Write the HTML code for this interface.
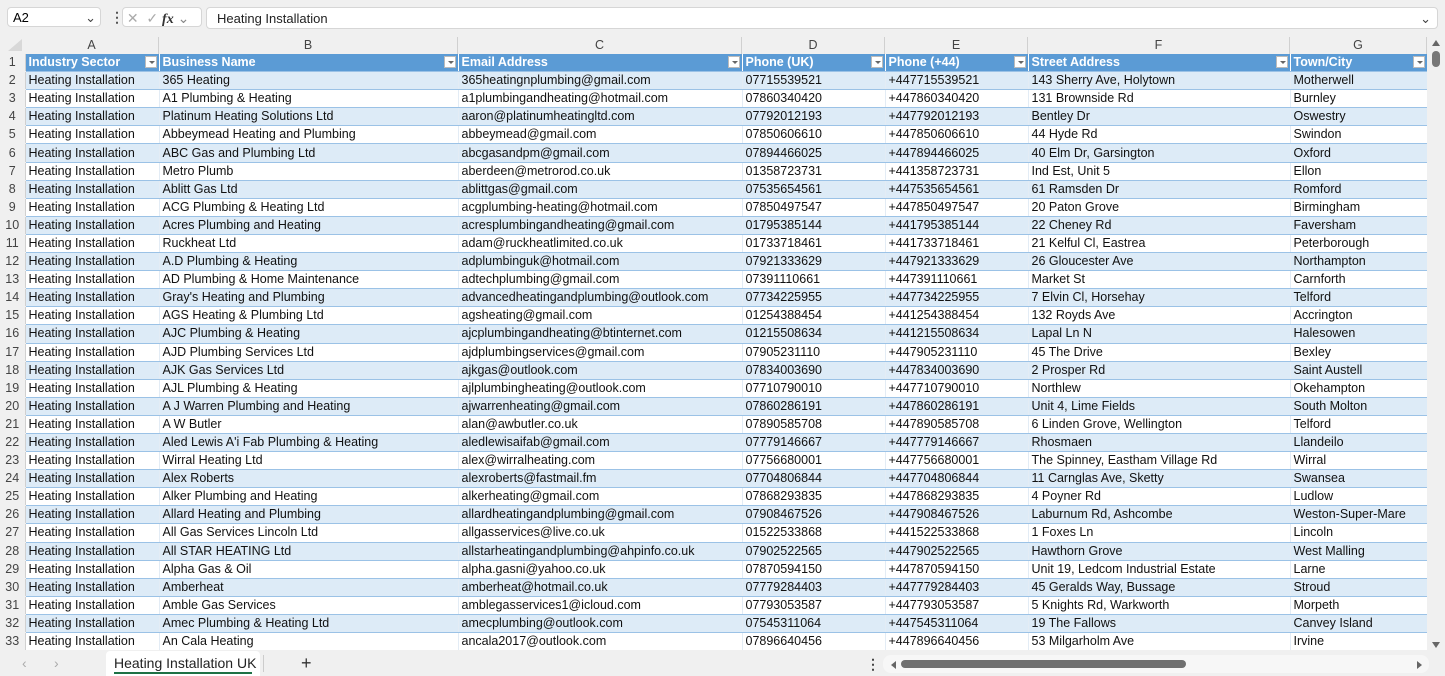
<!DOCTYPE html>
<html><head><meta charset="utf-8"><style>
body{margin:0;width:1445px;height:676px;overflow:hidden;background:#f0f0f0;font-family:"Liberation Sans",sans-serif;position:relative}
.abs{position:absolute}
.box{background:#fff;border:1px solid #d6d6d6;border-radius:4px}
table{border-collapse:collapse;table-layout:fixed;position:absolute;left:0;top:54px;font-size:12.5px;color:#111}
td{height:17.1px;padding:0 3px;white-space:nowrap;overflow:hidden;border-bottom:1px solid #9bc2e6;border-right:1px solid #e3ecf5;line-height:17px}
td.n{background:#f0f0f0;color:#444;text-align:center;border-right:1px solid #d0d0d0;border-bottom:1px solid #f0f0f0;padding:0;font-size:12.5px}
tr:nth-child(even) td:not(.n){background:#ddebf7}
tr:nth-child(odd) td:not(.n){background:#fff}
tr.h td:not(.n){background:#5b9bd5;color:#fff;font-weight:bold;position:relative;border-right:1px solid #fff}
.dd{position:absolute;right:2px;top:2px;width:12px;height:12px;background:#fff;border:1px solid #bbb;box-sizing:border-box}
.dd:after{content:"";position:absolute;left:3px;top:4px;border:3px solid transparent;border-top:3px solid #666}
.ch{position:absolute;top:37px;height:17px;font-size:12.5px;color:#444;text-align:center;line-height:17px;border-right:1px solid #d0d0d0;box-sizing:border-box}
</style></head><body>
<div class="abs" style="left:0;top:0;width:1445px;height:36px;background:#f0f0f0"></div>
<div class="abs box" style="left:7px;top:7px;width:94px;height:20px;font-size:13px;line-height:20px;padding-left:5px;box-sizing:border-box">A2<span style="position:absolute;right:4px;top:0;color:#444">&#8964;</span></div>
<div class="abs" style="left:110px;top:9px;font-size:14px;color:#555;font-weight:bold">&#8942;</div>
<div class="abs box" style="left:122px;top:7px;width:80px;height:20px;font-size:14px;line-height:20px;color:#aaa;box-sizing:border-box">&nbsp;✕ &nbsp;✓ <i style="color:#333;font-family:'Liberation Serif',serif;font-weight:bold">fx</i> <span style="color:#888">&#8964;</span></div>
<div class="abs box" style="left:206px;top:7px;width:1232px;height:22px;font-size:13px;line-height:22px;padding-left:10px;box-sizing:border-box;color:#222">Heating Installation<span style="position:absolute;right:6px;top:0;color:#444">&#8964;</span></div>
<div class="abs" style="left:0;top:36px;width:1430px;height:18px;background:#f0f0f0"></div>
<div class="abs" style="left:8px;top:39px;width:0;height:0;border-left:14px solid transparent;border-bottom:12px solid #d8d8d8"></div>
<div class="ch" style="left:25px;width:134px">A</div>
<div class="ch" style="left:159px;width:299px">B</div>
<div class="ch" style="left:458px;width:284px">C</div>
<div class="ch" style="left:742px;width:143px">D</div>
<div class="ch" style="left:885px;width:143px">E</div>
<div class="ch" style="left:1028px;width:262px">F</div>
<div class="ch" style="left:1290px;width:137px">G</div>
<table>
<colgroup><col style="width:25px"><col style="width:134px"><col style="width:299px"><col style="width:284px"><col style="width:143px"><col style="width:143px"><col style="width:262px"><col style="width:137px"></colgroup>
<tr class="h"><td class="n">1</td><td>Industry Sector<span class="dd"></span></td><td>Business Name<span class="dd"></span></td><td>Email Address<span class="dd"></span></td><td>Phone (UK)<span class="dd"></span></td><td>Phone (+44)<span class="dd"></span></td><td>Street Address<span class="dd"></span></td><td>Town/City<span class="dd"></span></td></tr>
<tr><td class="n">2</td><td>Heating Installation</td><td>365 Heating</td><td>365heatingnplumbing@gmail.com</td><td>07715539521</td><td>+447715539521</td><td>143 Sherry Ave, Holytown</td><td>Motherwell</td></tr>
<tr><td class="n">3</td><td>Heating Installation</td><td>A1 Plumbing &amp; Heating</td><td>a1plumbingandheating@hotmail.com</td><td>07860340420</td><td>+447860340420</td><td>131 Brownside Rd</td><td>Burnley</td></tr>
<tr><td class="n">4</td><td>Heating Installation</td><td>Platinum Heating Solutions Ltd</td><td>aaron@platinumheatingltd.com</td><td>07792012193</td><td>+447792012193</td><td>Bentley Dr</td><td>Oswestry</td></tr>
<tr><td class="n">5</td><td>Heating Installation</td><td>Abbeymead Heating and Plumbing</td><td>abbeymead@gmail.com</td><td>07850606610</td><td>+447850606610</td><td>44 Hyde Rd</td><td>Swindon</td></tr>
<tr><td class="n">6</td><td>Heating Installation</td><td>ABC Gas and Plumbing Ltd</td><td>abcgasandpm@gmail.com</td><td>07894466025</td><td>+447894466025</td><td>40 Elm Dr, Garsington</td><td>Oxford</td></tr>
<tr><td class="n">7</td><td>Heating Installation</td><td>Metro Plumb</td><td>aberdeen@metrorod.co.uk</td><td>01358723731</td><td>+441358723731</td><td>Ind Est, Unit 5</td><td>Ellon</td></tr>
<tr><td class="n">8</td><td>Heating Installation</td><td>Ablitt Gas Ltd</td><td>ablittgas@gmail.com</td><td>07535654561</td><td>+447535654561</td><td>61 Ramsden Dr</td><td>Romford</td></tr>
<tr><td class="n">9</td><td>Heating Installation</td><td>ACG Plumbing &amp; Heating Ltd</td><td>acgplumbing-heating@hotmail.com</td><td>07850497547</td><td>+447850497547</td><td>20 Paton Grove</td><td>Birmingham</td></tr>
<tr><td class="n">10</td><td>Heating Installation</td><td>Acres Plumbing and Heating</td><td>acresplumbingandheating@gmail.com</td><td>01795385144</td><td>+441795385144</td><td>22 Cheney Rd</td><td>Faversham</td></tr>
<tr><td class="n">11</td><td>Heating Installation</td><td>Ruckheat Ltd</td><td>adam@ruckheatlimited.co.uk</td><td>01733718461</td><td>+441733718461</td><td>21 Kelful Cl, Eastrea</td><td>Peterborough</td></tr>
<tr><td class="n">12</td><td>Heating Installation</td><td>A.D Plumbing &amp; Heating</td><td>adplumbinguk@hotmail.com</td><td>07921333629</td><td>+447921333629</td><td>26 Gloucester Ave</td><td>Northampton</td></tr>
<tr><td class="n">13</td><td>Heating Installation</td><td>AD Plumbing &amp; Home Maintenance</td><td>adtechplumbing@gmail.com</td><td>07391110661</td><td>+447391110661</td><td>Market St</td><td>Carnforth</td></tr>
<tr><td class="n">14</td><td>Heating Installation</td><td>Gray's Heating and Plumbing</td><td>advancedheatingandplumbing@outlook.com</td><td>07734225955</td><td>+447734225955</td><td>7 Elvin Cl, Horsehay</td><td>Telford</td></tr>
<tr><td class="n">15</td><td>Heating Installation</td><td>AGS Heating &amp; Plumbing Ltd</td><td>agsheating@gmail.com</td><td>01254388454</td><td>+441254388454</td><td>132 Royds Ave</td><td>Accrington</td></tr>
<tr><td class="n">16</td><td>Heating Installation</td><td>AJC Plumbing &amp; Heating</td><td>ajcplumbingandheating@btinternet.com</td><td>01215508634</td><td>+441215508634</td><td>Lapal Ln N</td><td>Halesowen</td></tr>
<tr><td class="n">17</td><td>Heating Installation</td><td>AJD Plumbing Services Ltd</td><td>ajdplumbingservices@gmail.com</td><td>07905231110</td><td>+447905231110</td><td>45 The Drive</td><td>Bexley</td></tr>
<tr><td class="n">18</td><td>Heating Installation</td><td>AJK Gas Services Ltd</td><td>ajkgas@outlook.com</td><td>07834003690</td><td>+447834003690</td><td>2 Prosper Rd</td><td>Saint Austell</td></tr>
<tr><td class="n">19</td><td>Heating Installation</td><td>AJL Plumbing &amp; Heating</td><td>ajlplumbingheating@outlook.com</td><td>07710790010</td><td>+447710790010</td><td>Northlew</td><td>Okehampton</td></tr>
<tr><td class="n">20</td><td>Heating Installation</td><td>A J Warren Plumbing and Heating</td><td>ajwarrenheating@gmail.com</td><td>07860286191</td><td>+447860286191</td><td>Unit 4, Lime Fields</td><td>South Molton</td></tr>
<tr><td class="n">21</td><td>Heating Installation</td><td>A W Butler</td><td>alan@awbutler.co.uk</td><td>07890585708</td><td>+447890585708</td><td>6 Linden Grove, Wellington</td><td>Telford</td></tr>
<tr><td class="n">22</td><td>Heating Installation</td><td>Aled Lewis A'i Fab Plumbing &amp; Heating</td><td>aledlewisaifab@gmail.com</td><td>07779146667</td><td>+447779146667</td><td>Rhosmaen</td><td>Llandeilo</td></tr>
<tr><td class="n">23</td><td>Heating Installation</td><td>Wirral Heating Ltd</td><td>alex@wirralheating.com</td><td>07756680001</td><td>+447756680001</td><td>The Spinney, Eastham Village Rd</td><td>Wirral</td></tr>
<tr><td class="n">24</td><td>Heating Installation</td><td>Alex Roberts</td><td>alexroberts@fastmail.fm</td><td>07704806844</td><td>+447704806844</td><td>11 Carnglas Ave, Sketty</td><td>Swansea</td></tr>
<tr><td class="n">25</td><td>Heating Installation</td><td>Alker Plumbing and Heating</td><td>alkerheating@gmail.com</td><td>07868293835</td><td>+447868293835</td><td>4 Poyner Rd</td><td>Ludlow</td></tr>
<tr><td class="n">26</td><td>Heating Installation</td><td>Allard Heating and Plumbing</td><td>allardheatingandplumbing@gmail.com</td><td>07908467526</td><td>+447908467526</td><td>Laburnum Rd, Ashcombe</td><td>Weston-Super-Mare</td></tr>
<tr><td class="n">27</td><td>Heating Installation</td><td>All Gas Services Lincoln Ltd</td><td>allgasservices@live.co.uk</td><td>01522533868</td><td>+441522533868</td><td>1 Foxes Ln</td><td>Lincoln</td></tr>
<tr><td class="n">28</td><td>Heating Installation</td><td>All STAR HEATING Ltd</td><td>allstarheatingandplumbing@ahpinfo.co.uk</td><td>07902522565</td><td>+447902522565</td><td>Hawthorn Grove</td><td>West Malling</td></tr>
<tr><td class="n">29</td><td>Heating Installation</td><td>Alpha Gas &amp; Oil</td><td>alpha.gasni@yahoo.co.uk</td><td>07870594150</td><td>+447870594150</td><td>Unit 19, Ledcom Industrial Estate</td><td>Larne</td></tr>
<tr><td class="n">30</td><td>Heating Installation</td><td>Amberheat</td><td>amberheat@hotmail.co.uk</td><td>07779284403</td><td>+447779284403</td><td>45 Geralds Way, Bussage</td><td>Stroud</td></tr>
<tr><td class="n">31</td><td>Heating Installation</td><td>Amble Gas Services</td><td>amblegasservices1@icloud.com</td><td>07793053587</td><td>+447793053587</td><td>5 Knights Rd, Warkworth</td><td>Morpeth</td></tr>
<tr><td class="n">32</td><td>Heating Installation</td><td>Amec Plumbing &amp; Heating Ltd</td><td>amecplumbing@outlook.com</td><td>07545311064</td><td>+447545311064</td><td>19 The Fallows</td><td>Canvey Island</td></tr>
<tr><td class="n">33</td><td>Heating Installation</td><td>An Cala Heating</td><td>ancala2017@outlook.com</td><td>07896640456</td><td>+447896640456</td><td>53 Milgarholm Ave</td><td>Irvine</td></tr>
</table>
<div class="abs" style="left:1427px;top:36px;width:18px;height:614px;background:#f0f0f0"></div>
<div class="abs" style="left:1432px;top:40px;width:0;height:0;border-left:4px solid transparent;border-right:4px solid transparent;border-bottom:6px solid #666"></div>
<div class="abs" style="left:1432px;top:51px;width:8px;height:16px;background:#777;border-radius:4px"></div>
<div class="abs" style="left:1432px;top:642px;width:0;height:0;border-left:4px solid transparent;border-right:4px solid transparent;border-top:6px solid #666"></div>
<div class="abs" style="left:0;top:650px;width:1445px;height:26px;background:#f0f0f0"></div>
<div class="abs" style="left:22px;top:655px;color:#aaa;font-size:14px">&#8249;</div>
<div class="abs" style="left:54px;top:655px;color:#aaa;font-size:14px">&#8250;</div>
<div class="abs" style="left:106px;top:651px;width:154px;height:25px;background:#fff;border-radius:4px 4px 0 0"></div>
<div class="abs" style="left:114px;top:655px;font-size:14px;color:#222">Heating Installation UK</div>
<div class="abs" style="left:114px;top:672px;width:138px;height:2px;background:#1e7145"></div>
<div class="abs" style="left:263px;top:655px;width:1px;height:17px;background:#ccc"></div>
<div class="abs" style="left:301px;top:653px;font-size:18px;color:#333">+</div>
<div class="abs" style="left:866px;top:656px;font-size:14px;color:#444;font-weight:bold">&#8942;</div>
<div class="abs" style="left:883px;top:655px;width:546px;height:18px;background:#f7f7f7;border-radius:8px"></div>
<div class="abs" style="left:891px;top:661px;width:0;height:0;border-top:4px solid transparent;border-bottom:4px solid transparent;border-right:5px solid #666"></div>
<div class="abs" style="left:901px;top:660px;width:285px;height:8px;background:#707070;border-radius:4px"></div>
<div class="abs" style="left:1417px;top:661px;width:0;height:0;border-top:4px solid transparent;border-bottom:4px solid transparent;border-left:5px solid #666"></div>
</body></html>
